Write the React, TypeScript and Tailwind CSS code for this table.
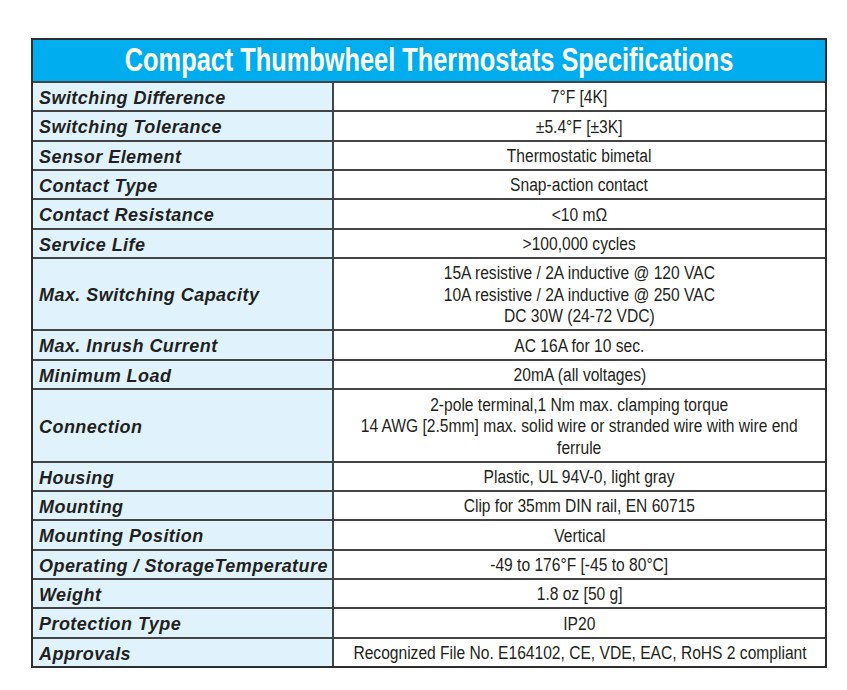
const specs: { label: string; value: string[]; h: string }[] = [
  { label: "Switching Difference", value: ["7°F [4K]"], h: "h-[29px]" },
  { label: "Switching Tolerance", value: ["±5.4°F [±3K]"], h: "h-[30px]" },
  { label: "Sensor Element", value: ["Thermostatic bimetal"], h: "h-[29px]" },
  { label: "Contact Type", value: ["Snap-action contact"], h: "h-[29px]" },
  { label: "Contact Resistance", value: ["<10 mΩ"], h: "h-[30px]" },
  { label: "Service Life", value: [">100,000 cycles"], h: "h-[29px]" },
  {
    label: "Max. Switching Capacity",
    value: [
      "15A resistive / 2A inductive @ 120 VAC",
      "10A resistive / 2A inductive @ 250 VAC",
      "DC 30W (24-72 VDC)",
    ],
    h: "h-[72px]",
  },
  { label: "Max. Inrush Current", value: ["AC 16A for 10 sec."], h: "h-[30px]" },
  { label: "Minimum Load", value: ["20mA (all voltages)"], h: "h-[29px]" },
  {
    label: "Connection",
    value: [
      "2-pole terminal,1 Nm max. clamping torque",
      "14 AWG [2.5mm] max. solid wire or stranded wire with wire end",
      "ferrule",
    ],
    h: "h-[73px]",
  },
  { label: "Housing", value: ["Plastic, UL 94V-0, light gray"], h: "h-[29px]" },
  { label: "Mounting", value: ["Clip for 35mm DIN rail, EN 60715"], h: "h-[29px]" },
  { label: "Mounting Position", value: ["Vertical"], h: "h-[30px]" },
  { label: "Operating / StorageTemperature", value: ["-49 to 176°F [-45 to 80°C]"], h: "h-[29px]" },
  { label: "Weight", value: ["1.8 oz [50 g]"], h: "h-[29px]" },
  { label: "Protection Type", value: ["IP20"], h: "h-[30px]" },
  { label: "Approvals", value: ["Recognized File No. E164102, CE, VDE, EAC, RoHS 2 compliant"], h: "h-[29px]" },
]

// no narrow face installed, so the condensed look is a horizontal squeeze of Liberation Sans
export default function App() {
  return (
    <div className="min-h-[690px] bg-white pt-[38px] pl-[31px]">
      <div className="w-[796px] border-2 border-[#2e2e2e]">
        <div className="h-[41px] bg-[#00aeef] flex items-center justify-center">
          <h1 className="text-white text-[32.5px] font-bold leading-none whitespace-nowrap scale-x-[0.78] font-['Liberation_Sans',Arial,sans-serif]">
            Compact Thumbwheel Thermostats Specifications
          </h1>
        </div>

        {specs.map((row) => (
          <div
            key={row.label}
            className={`grid grid-cols-[301px_1fr] grid-rows-[minmax(0,1fr)] border-t-2 border-[#444] ${row.h}`}
          >
            <div className="bg-[#e0f3fd] border-r-2 border-[#444] flex items-center pl-[6px] pt-[2px] overflow-hidden">
              <span className="text-[18px] leading-[20px] font-bold italic tracking-[0.45px] text-[#231f20] font-['Liberation_Sans',Arial,sans-serif] whitespace-nowrap">
                {row.label}
              </span>
            </div>
            <div className="flex items-center justify-center min-w-0 pt-[1px]">
              <div className="text-center text-[18.8px] leading-[21.5px] text-[#231f20] font-['Liberation_Sans',Arial,sans-serif] whitespace-nowrap scale-x-[0.83] shrink-0">
                {row.value.map((line) => (
                  <div key={line}>{line}</div>
                ))}
              </div>
            </div>
          </div>
        ))}
      </div>
    </div>
  )
}
